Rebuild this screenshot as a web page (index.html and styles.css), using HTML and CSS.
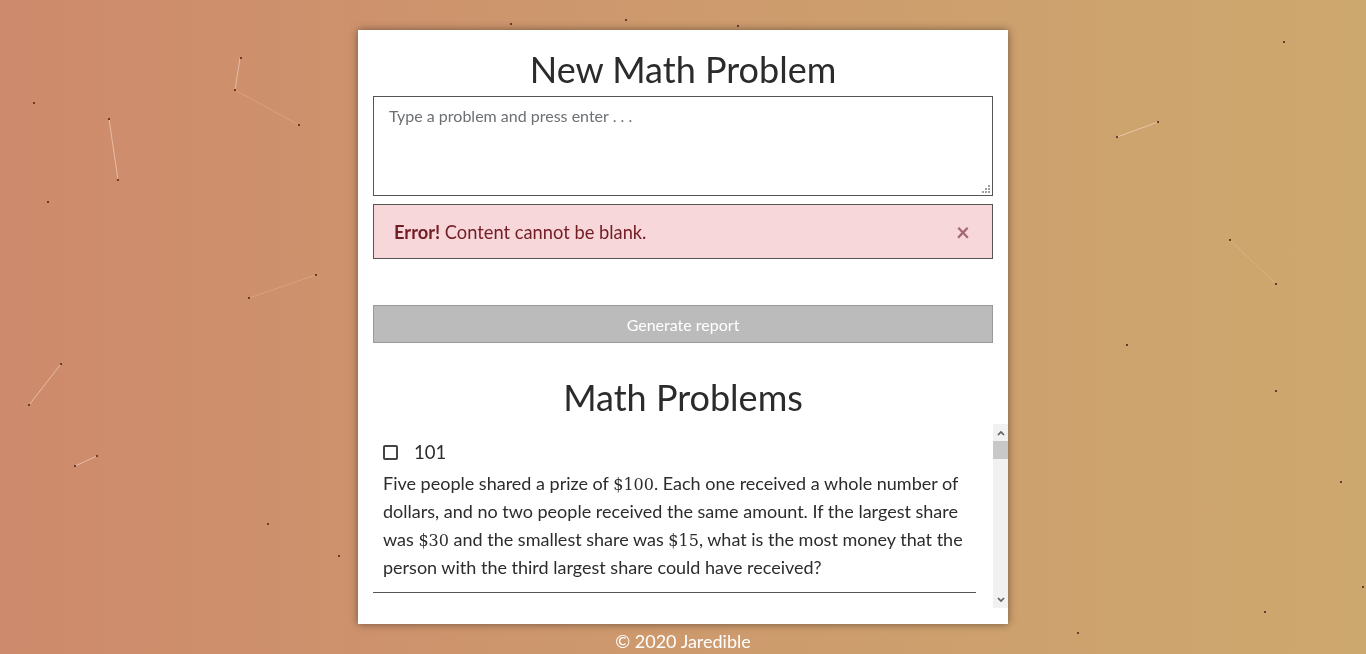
FILE: index.html
```html
<!DOCTYPE html>
<html lang="en">
<head>
<meta charset="utf-8">
<title>Math Problems</title>
<link rel="stylesheet" href="styles.css">
</head>
<body>
<svg class="particles" width="1366" height="654" viewBox="0 0 1366 654">
  <g class="links">
    <line x1="240" y1="58" x2="235" y2="90"/>
    <line x1="235" y1="90" x2="299" y2="125" class="faint"/>
    <line x1="109" y1="119" x2="118" y2="180"/>
    <line x1="249" y1="298" x2="316" y2="275" class="faint"/>
    <line x1="61" y1="364" x2="29" y2="405"/>
    <line x1="97" y1="456" x2="75" y2="466"/>
    <line x1="1117" y1="137" x2="1158" y2="122"/>
    <line x1="1230" y1="240" x2="1276" y2="284" class="faint"/>
  </g>
  <g class="dots">
    <rect x="240" y="57" width="2" height="2"/>
    <rect x="234" y="89" width="2" height="2"/>
    <rect x="298" y="124" width="2" height="2"/>
    <rect x="33" y="102" width="2" height="2"/>
    <rect x="108" y="118" width="2" height="2"/>
    <rect x="117" y="179" width="2" height="2"/>
    <rect x="47" y="201" width="2" height="2"/>
    <rect x="248" y="297" width="2" height="2"/>
    <rect x="315" y="274" width="2" height="2"/>
    <rect x="60" y="363" width="2" height="2"/>
    <rect x="28" y="404" width="2" height="2"/>
    <rect x="96" y="455" width="2" height="2"/>
    <rect x="74" y="465" width="2" height="2"/>
    <rect x="267" y="523" width="2" height="2"/>
    <rect x="338" y="555" width="2" height="2"/>
    <rect x="510" y="23" width="2" height="2"/>
    <rect x="625" y="19" width="2" height="2"/>
    <rect x="737" y="25" width="2" height="2"/>
    <rect x="1283" y="41" width="2" height="2"/>
    <rect x="1116" y="136" width="2" height="2"/>
    <rect x="1157" y="121" width="2" height="2"/>
    <rect x="1229" y="239" width="2" height="2"/>
    <rect x="1275" y="283" width="2" height="2"/>
    <rect x="1126" y="344" width="2" height="2"/>
    <rect x="1275" y="390" width="2" height="2"/>
    <rect x="1340" y="481" width="2" height="2"/>
    <rect x="1362" y="586" width="2" height="2"/>
    <rect x="1264" y="611" width="2" height="2"/>
    <rect x="1077" y="632" width="2" height="2"/>
  </g>
</svg>
<main class="page">
  <section class="card">
    <h1 class="title">New Math Problem</h1>
    <div class="input-wrap">
      <textarea class="input" placeholder="Type a problem and press enter . . ."></textarea>
      <svg class="grip" width="9" height="9" viewBox="0 0 9 9">
        <rect x="7" y="1" width="2" height="2"/>
        <rect x="4" y="4" width="2" height="2"/>
        <rect x="7" y="4" width="2" height="2"/>
        <rect x="1" y="7" width="2" height="2"/>
        <rect x="4" y="7" width="2" height="2"/>
        <rect x="7" y="7" width="2" height="2"/>
      </svg>
    </div>
    <div class="alert">
      <span class="alert-text"><strong>Error!</strong> Content cannot be blank.</span>
      <span class="alert-close">&times;</span>
    </div>
    <button class="btn-report" type="button">Generate report</button>
    <h2 class="title title-list">Math Problems</h2>
    <div class="list">
      <div class="list-content">
        <div class="item">
          <label class="item-head"><span class="checkbox"></span><span class="item-num">101</span></label>
          <p class="item-text">Five people shared a prize of <span class="math">$100</span>. Each one received a whole number of dollars, and no two people received the same amount. If the largest share was <span class="math">$30</span> and the smallest share was <span class="math">$15</span>, what is the most money that the person with the third largest share could have received?</p>
        </div>
      </div>
      <div class="scrollbar">
        <span class="sb-btn">
          <svg width="8" height="6" viewBox="0 0 8 6"><path d="M1 5 L4 2 L7 5" fill="none" stroke="#606060" stroke-width="1.7"/></svg>
        </span>
        <span class="sb-track"><span class="sb-thumb"></span></span>
        <span class="sb-btn">
          <svg width="8" height="6" viewBox="0 0 8 6"><path d="M1 1 L4 4 L7 1" fill="none" stroke="#606060" stroke-width="1.7"/></svg>
        </span>
      </div>
    </div>
  </section>
  <footer class="footer">© 2020 Jaredible</footer>
</main>
</body>
</html>
```

FILE: styles.css
```css
html, body {
  margin: 0;
  padding: 0;
  height: 100%;
}
body {
  background: linear-gradient(to right, #ce8a6c 0%, #cd9a6d 50%, #cda86e 100%);
  font-family: Lato, "Noto Sans", sans-serif;
  color: #2c2c2c;
  overflow: hidden;
}
.particles {
  position: fixed;
  left: 0;
  top: 0;
  z-index: 0;
}
.links line {
  stroke: rgba(255, 235, 220, 0.5);
  stroke-width: 1;
}
.links line.faint {
  stroke: rgba(255, 235, 220, 0.2);
}
.dots rect {
  fill: #6a3a2a;
}
.page {
  position: relative;
  z-index: 1;
  display: flex;
  flex-direction: column;
  align-items: center;
  padding-top: 30px;
}
.card {
  width: 650px;
  height: 594px;
  box-sizing: border-box;
  background: #fff;
  box-shadow: 0 0 8px rgba(0, 0, 0, 0.45);
  padding: 15px 0 16px 15px;
  display: flex;
  flex-direction: column;
}
.title {
  margin: 0 15px 0 0;
  text-align: center;
  font-weight: 400;
  font-size: 36px;
  line-height: 48px;
  color: #2b2b2b;
}
.input-wrap {
  position: relative;
  width: 620px;
  height: 100px;
  margin-top: 3px;
}
.input {
  display: block;
  width: 620px;
  height: 100px;
  box-sizing: border-box;
  border: 1px solid #555;
  padding: 9px 15px;
  font-family: Lato, "Noto Sans", sans-serif;
  font-size: 16px;
  color: #333;
  resize: none;
  outline: none;
}
.input::placeholder {
  color: #6c6f73;
}
.grip {
  position: absolute;
  right: 3px;
  bottom: 3px;
  fill: #a0a0a0;
}
.alert {
  width: 620px;
  height: 55px;
  box-sizing: border-box;
  margin-top: 8px;
  background: #f8d7da;
  border: 1px solid #555;
  color: #721c24;
  font-size: 18.3px;
  display: flex;
  align-items: center;
  justify-content: space-between;
  padding: 0 22px 0 20px;
}
.alert-close {
  color: #a46870;
  font-size: 24px;
  font-weight: 700;
  line-height: 1;
}
.btn-report {
  width: 620px;
  height: 38px;
  margin-top: 46px;
  background: #bbb;
  border: 1px solid #999;
  color: #fff;
  font-family: Lato, "Noto Sans", sans-serif;
  font-size: 16px;
}
.title-list {
  margin-top: 30px;
}
.list {
  margin-top: 3px;
  flex: 1;
  min-height: 0;
  display: flex;
}
.list-content {
  flex: 1;
  overflow: hidden;
}
.scrollbar {
  width: 15px;
  display: flex;
  flex-direction: column;
  background: #f1f1f1;
}
.sb-btn {
  height: 17px;
  display: flex;
  align-items: center;
  justify-content: center;
}
.sb-track {
  flex: 1;
  display: flex;
  flex-direction: column;
}
.sb-thumb {
  height: 18px;
  background: #c8c8c8;
}
.item {
  padding: 0 0 0 10px;
  border-bottom: 1px solid #555;
  margin-right: 17px;
}
.item-head {
  display: flex;
  align-items: center;
  gap: 16px;
  padding-top: 16px;
}
.checkbox {
  width: 11px;
  height: 11px;
  border: 2px solid #444;
  border-radius: 2px;
}
.item-num {
  font-size: 18.5px;
  line-height: 24px;
}
.item-text {
  margin: 5px 0 11px;
  font-size: 18px;
  line-height: 28px;
}
.math {
  font-family: "DejaVu Serif", "Liberation Serif", serif;
  font-size: 16px;
  font-weight: 400;
  line-height: 1;
}
.footer {
  margin-top: 6px;
  color: #fff;
  font-size: 18px;
}
```
